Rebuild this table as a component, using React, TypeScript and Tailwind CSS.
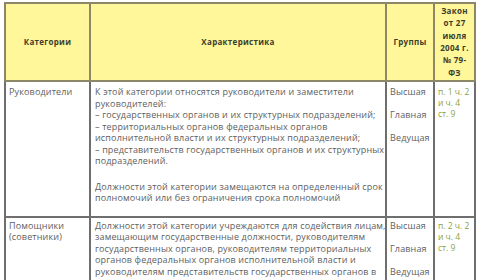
const rows = [
  {
    cat: ['Руководители'],
    text: [
      [
        'К этой категории относятся руководители и заместители',
        'руководителей:',
        '– государственных органов и их структурных подразделений;',
        '– территориальных органов федеральных органов',
        'исполнительной власти и их структурных подразделений;',
        '– представительств государственных органов и их структурных',
        'подразделений.',
      ],
      [
        'Должности этой категории замещаются на определенный срок',
        'полномочий или без ограничения срока полномочий',
      ],
    ],
    law: ['п. 1 ч. 2', 'и ч. 4', 'ст. 9'],
  },
  {
    cat: ['Помощники', '(советники)'],
    text: [
      [
        'Должности этой категории учреждаются для содействия лицам,',
        'замещающим государственные должности, руководителям',
        'государственных органов, руководителям территориальных',
        'органов федеральных органов исполнительной власти и',
        'руководителям представительств государственных органов в',
      ],
    ],
    law: ['п. 2 ч. 2', 'и ч. 4', 'ст. 9'],
  },
];

const groups = ['Высшая', 'Главная', 'Ведущая'];

export default function App() {
  return (
    <div className="w-[480px] h-[280px] overflow-hidden bg-white pl-[4px] pt-[2px] font-['Open_Sans',sans-serif]">
      <table className="border-collapse table-fixed w-[470px] text-[9px] tracking-[0.15px] leading-[11.5px] text-[#606060]">
        <colgroup>
          <col className="w-[85px]" />
          <col className="w-[296px]" />
          <col className="w-[48px]" />
          <col className="w-[41px]" />
        </colgroup>
        <thead>
          <tr className="h-[78px] bg-[#fff799] text-[#3d3d2e] font-bold text-[8px] tracking-[0.3px] leading-[12.3px]">
            <th className="border-2 border-[#8c8766] text-center align-middle">Категории</th>
            <th className="border-2 border-[#8c8766] text-center align-middle">Характеристика</th>
            <th className="border-2 border-[#8c8766] text-center align-middle">Группы</th>
            <th className="border-2 border-[#8c8766] text-center align-middle">
              {['Закон', 'от 27', 'июля', '2004 г.', '№ 79-', 'ФЗ'].map((l) => (
                <div key={l} className="whitespace-nowrap">{l}</div>
              ))}
            </th>
          </tr>
        </thead>
        <tbody>
          {rows.map((r, i) => {
            const pt = i === 0 ? 'pt-[4px]' : 'pt-[2px]';
            return (
              <tr key={i} className={i === 0 ? 'h-[135px]' : ''}>
                <td className={'border-2 border-[#6f6f6f] align-top px-[3px] ' + pt}>
                  {r.cat.map((c) => (
                    <div key={c} className="whitespace-nowrap">{c}</div>
                  ))}
                </td>
                <td className={'border-2 border-[#6f6f6f] align-top px-[4px] pb-[12px] ' + pt}>
                  {r.text.map((p, j) => (
                    <div key={j} className={j > 0 ? 'mt-[14px]' : ''}>
                      {p.map((l) => (
                        <div key={l} className="whitespace-nowrap">{l}</div>
                      ))}
                    </div>
                  ))}
                </td>
                <td className={'border-2 border-[#6f6f6f] align-top px-[3px] ' + pt}>
                  <div className="flex flex-col gap-[11.5px]">
                    {groups.map((g) => (
                      <div key={g}>{g}</div>
                    ))}
                  </div>
                </td>
                <td className={'border-2 border-[#6f6f6f] align-top pl-[3px] pr-[1px] text-[8.5px] tracking-normal leading-[11px] text-[#8aa33f] ' + pt}>
                  {r.law.map((l) => (
                    <div key={l} className="whitespace-nowrap">{l}</div>
                  ))}
                </td>
              </tr>
            );
          })}
        </tbody>
      </table>
    </div>
  );
}
